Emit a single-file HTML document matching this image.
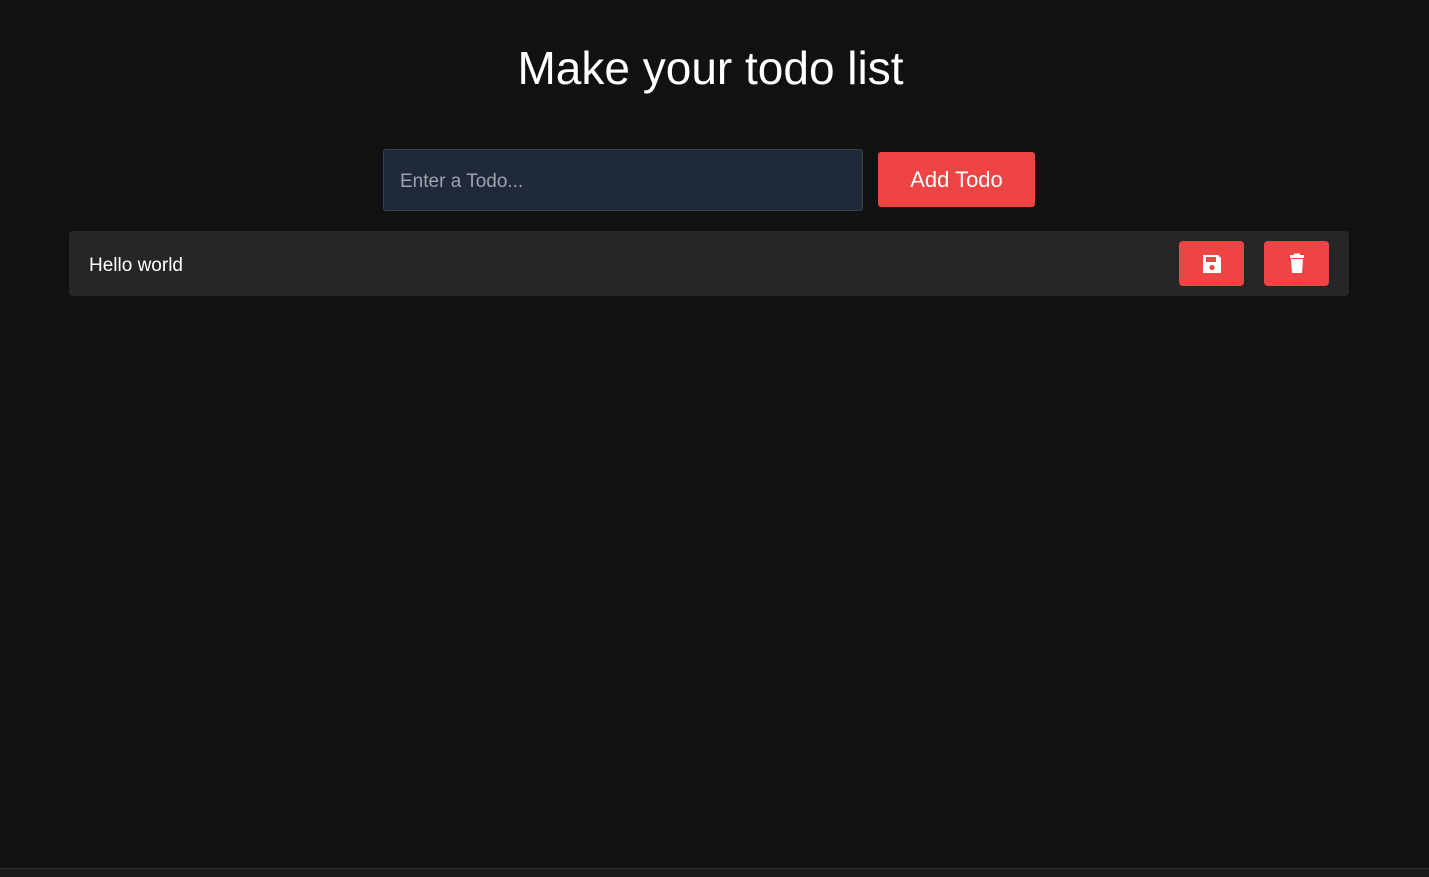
<!DOCTYPE html>
<html><head><meta charset="utf-8"><style>
html,body{margin:0;padding:0;background:#111111;width:1429px;height:877px;overflow:hidden;font-family:"Liberation Sans",sans-serif;color:#fff;position:relative}
h1{position:absolute;top:40px;left:0;width:1421px;text-align:center;margin:0;font-weight:400;font-size:46px;line-height:56px}
.inp{position:absolute;left:383px;top:149px;width:480px;height:62px;background:#1f2937;border:1px solid #374151;border-radius:3px;box-sizing:border-box;color:#9ca3af;font-size:19px;line-height:64px;padding-left:16px}
.add{position:absolute;left:878px;top:152px;width:157px;height:55px;background:#ef4444;border-radius:3px;font-size:22px;line-height:55px;text-align:center}
.row{position:absolute;left:69px;top:231px;width:1280px;height:65px;background:#262628;border-radius:4px}
.row .t{position:absolute;left:20px;top:0;line-height:70px;font-size:19px}
.b{position:absolute;top:10px;width:65px;height:45px;background:#ef4444;border-radius:4px;display:flex;align-items:center;justify-content:center}
.bar{position:absolute;left:0;top:868px;width:1429px;height:9px;background:#1b1b1b;border-top:1px solid #2e2e2e}
</style></head><body>
<h1>Make your todo list</h1>
<div class="inp">Enter a Todo...</div>
<div class="add">Add Todo</div>
<div class="row"><div class="t">Hello world</div>
<div class="b" style="left:1110px"><svg width="22" height="22" viewBox="0 0 22 22"><path d="M2 2h15l3 3v15H2z" fill="#fff"/><rect x="5" y="4" width="10" height="5" fill="#ef4444"/><circle cx="11" cy="14.5" r="2.6" fill="#ef4444"/></svg></div>
<div class="b" style="left:1195px"><svg width="18" height="22" viewBox="0 0 18 22"><rect x="2" y="2" width="14" height="3" fill="#fff"/><rect x="6" y="0.5" width="6" height="2" fill="#fff"/><path d="M3 6h12l-1 14H4z" fill="#fff"/></svg></div>
</div>
<div class="bar"></div>
</body></html>
